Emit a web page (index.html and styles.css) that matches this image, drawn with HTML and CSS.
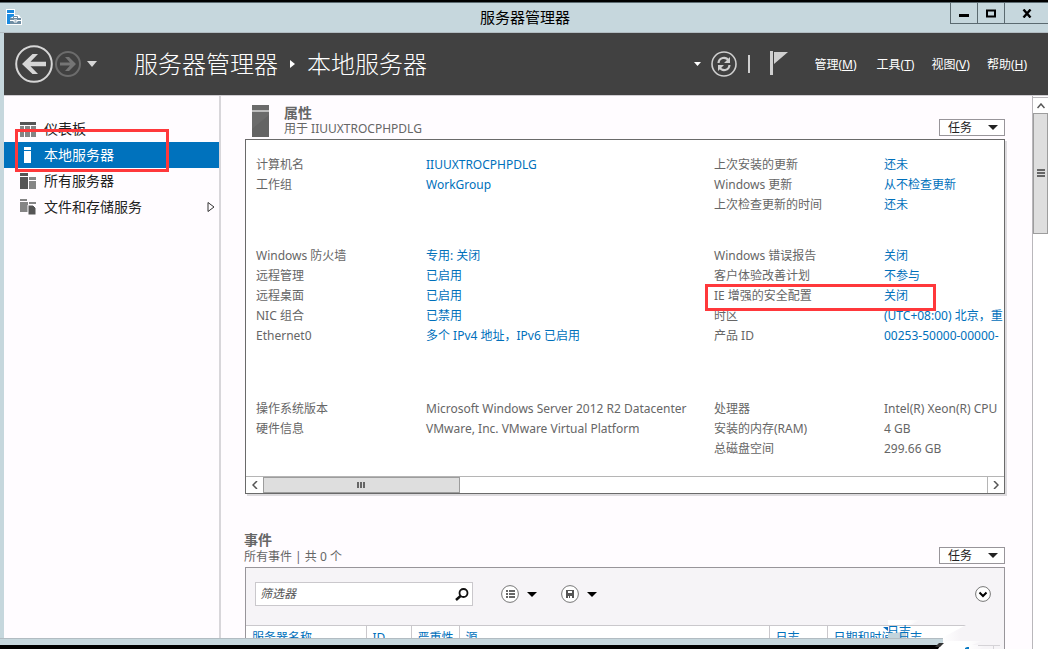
FILE: index.html
```html
<!DOCTYPE html>
<html lang="zh-CN">
<head>
<meta charset="utf-8">
<title>服务器管理器</title>
<link rel="stylesheet" href="styles.css">
</head>
<body>
<div class="window">
  <div class="titlebar">
    <svg class="app-icon" width="16" height="16" viewBox="0 0 16 16">
      <path d="M0 0h9v6h4l3 4v6H0z" fill="#fff"/>
      <path d="M1 1h7v3H1zM1 5h7v2L4 9v6H1z" fill="#1b8be0"/>
      <path d="M4 9h11v6H4z" fill="#6f8da3"/>
      <path d="M7.500 9V7.500h4V9" fill="none" stroke="#6f8da3"/>
      <path d="M4 11.500h4m3 0h4M8 11h3v2H8z" fill="none" stroke="#fff"/>
    </svg>
    <span class="window-title">服务器管理器</span>
    <div class="window-buttons">
      <button class="win-btn" aria-label="最小化"><svg width="10" height="9"><path d="M0 5h10v3H0z"/></svg></button>
      <button class="win-btn" aria-label="最大化"><svg width="10" height="9"><path d="M1 1.500h8v6H1z" fill="none" stroke="#000" stroke-width="2"/></svg></button>
      <button class="win-btn win-close" aria-label="关闭"><svg width="10" height="9"><path d="M1.500 .5l7 8M8.500 .5l-7 8" stroke="#000" stroke-width="2.400"/></svg></button>
    </div>
  </div>

  <header class="header">
    <button class="icon-btn" aria-label="后退"><svg width="38" height="38" viewBox="0 0 38 38" fill="none"><circle cx="19" cy="19" r="17.800" stroke="#d6d6d6" stroke-width="2"/><path d="M7 19L17.500 9H23l-7.500 7.700H31v4.600H15.500L23 29h-5.500z" fill="#d6d6d6"/></svg></button>
    <button class="icon-btn forward" aria-label="前进"><svg width="26" height="26" viewBox="0 0 26 26" fill="none"><circle cx="13" cy="13" r="12" stroke="#6c6c6c" stroke-width="2"/><path d="M21 13l-7-7h-4l5 5.500H5v3h10L10 20h4z" fill="#757575"/></svg></button>
    <button class="icon-btn history" aria-label="历史记录"><svg width="10" height="6"><path d="M0 0h10L5 6z" fill="#d6d6d6"/></svg></button>
    <nav class="crumbs" aria-label="位置">
      <span>服务器管理器</span>
      <svg width="5" height="8"><path d="M0 0l5 4-5 4z" fill="#fff"/></svg>
      <span>本地服务器</span>
    </nav>
    <div class="header-tools">
      <button class="icon-btn" aria-label="更多"><svg width="7" height="4"><path d="M0 0h7L3.500 4z" fill="#fff"/></svg></button>
      <button class="icon-btn refresh" aria-label="刷新"><svg width="26" height="26" viewBox="0 0 26 26" fill="none"><circle cx="13" cy="13" r="12" stroke="#cfcfcf" stroke-width="1.600"/><g stroke="#cfcfcf" stroke-width="2.200"><path d="M7.500 12c.5-6 7.500-6.500 10-2.500M18.500 14c-.5 6-7.500 6.500-10 2.500"/></g><path d="M19 6v6h-6zM7 20v-6h6z" fill="#cfcfcf"/></svg></button>
      <span class="divider"></span>
      <button class="icon-btn flag" aria-label="通知"><svg width="18" height="24"><path d="M0 0h3v24H0zM4 1h14L4 13z" fill="#cfcfcf"/></svg></button>
      <button class="menu menu-manage">管理(<u>M</u>)</button>
      <button class="menu">工具(<u>T</u>)</button>
      <button class="menu">视图(<u>V</u>)</button>
      <button class="menu">帮助(<u>H</u>)</button>
    </div>
  </header>

  <div class="body">
    <nav class="sidebar" aria-label="导航">
      <a class="nav-item" href="#dashboard"><svg width="16" height="16"><path d="M0 1h16v3H0z" fill="#555"/><path d="M0 5h4v5H0zM5 5h5v5H5zM11 5h5v5h-5zM0 11h4v5H0zM5 11h5v5H5zM11 11h5v5h-5z" fill="#858585"/></svg>仪表板</a>
      <a class="nav-item selected" href="#local" aria-current="page"><svg width="16" height="16"><path d="M4 0h7v3H4zM4 4h7v12H4z" fill="#fff"/></svg>本地服务器<span class="mark mark-nav"></span></a>
      <a class="nav-item" href="#all"><svg width="16" height="16"><path d="M0 0h8v3H0zM0 4h8v12H0z" fill="#555"/><path d="M9 4h7v3H9zM9 8h7v8H9z" fill="#858585"/></svg>所有服务器</a>
      <a class="nav-item" href="#files"><svg width="16" height="16"><path d="M0 0h7v2H0zM0 3h8v10H0zM9 3h7v2H9z" fill="#858585"/><path d="M8 6h5l3 3v7H8z" fill="#555" stroke="#fffcff"/></svg>文件和存储服务<svg class="expand" width="8" height="10"><path d="M1 .5l6 4.500-6 4.500z" fill="none" stroke="#333"/></svg></a>
    </nav>

    <main class="content">
      <section class="properties">
        <div class="section-head">
          <svg width="17" height="32"><path d="M0 0h17v32H0z" fill="#6b6b6b"/><path d="M0 5h17v2H0z" fill="#bdbdbd"/><path d="M0 32V24L17 10v22z" fill="#646464"/></svg>
          <div class="heading"><h2>属性</h2><p>用于 IIUUXTROCPHPDLG</p></div>
          <button class="tasks">任务<svg width="10" height="5"><path d="M0 0h10L5 5z" fill="#222"/></svg></button>
        </div>
        <div class="panel">
          <div class="groups">
            <div class="group">
              <dl>
                <div><dt>计算机名</dt><dd><a href="#name">IIUUXTROCPHPDLG</a></dd></div>
                <div><dt>工作组</dt><dd><a href="#workgroup">WorkGroup</a></dd></div>
              </dl>
              <dl>
                <div><dt>上次安装的更新</dt><dd><a href="#installed">还未</a></dd></div>
                <div><dt>Windows 更新</dt><dd><a href="#update">从不检查更新</a></dd></div>
                <div><dt>上次检查更新的时间</dt><dd><a href="#checked">还未</a></dd></div>
              </dl>
            </div>
            <div class="group group-network">
              <dl>
                <div><dt>Windows 防火墙</dt><dd><a href="#firewall">专用: 关闭</a></dd></div>
                <div><dt>远程管理</dt><dd><a href="#remote">已启用</a></dd></div>
                <div><dt>远程桌面</dt><dd><a href="#desktop">已启用</a></dd></div>
                <div><dt>NIC 组合</dt><dd><a href="#nic">已禁用</a></dd></div>
                <div><dt>Ethernet0</dt><dd><a href="#ethernet">多个 IPv4 地址，IPv6 已启用</a></dd></div>
              </dl>
              <dl>
                <div><dt>Windows 错误报告</dt><dd><a href="#errors">关闭</a></dd></div>
                <div><dt>客户体验改善计划</dt><dd><a href="#ceip">不参与</a></dd></div>
                <div><dt>IE 增强的安全配置</dt><dd><a href="#ie">关闭</a></dd><span class="mark mark-row"></span></div>
                <div><dt>时区</dt><dd><a href="#tz">(UTC+08:00) 北京，重</a></dd></div>
                <div><dt>产品 ID</dt><dd><a href="#id">00253-50000-00000-</a></dd></div>
              </dl>
            </div>
            <div class="group group-system">
              <dl>
                <div><dt>操作系统版本</dt><dd>Microsoft Windows Server 2012 R2 Datacenter</dd></div>
                <div><dt>硬件信息</dt><dd>VMware, Inc. VMware Virtual Platform</dd></div>
              </dl>
              <dl>
                <div><dt>处理器</dt><dd>Intel(R) Xeon(R) CPU</dd></div>
                <div><dt>安装的内存(RAM)</dt><dd>4 GB</dd></div>
                <div><dt>总磁盘空间</dt><dd>299.66 GB</dd></div>
              </dl>
            </div>
          </div>
          <div class="hscroll">
            <button class="scroll-btn" aria-label="向左滚动"><svg width="6" height="8"><path d="M5 0L1 4l4 4" fill="none" stroke="#555" stroke-width="1.500"/></svg></button>
            <div class="hthumb"><svg width="9" height="6"><path d="M0 0h2v6H0zM3 0h2v6H3zM6 0h2v6H6z" fill="#666"/></svg></div>
            <button class="scroll-btn scroll-right" aria-label="向右滚动"><svg width="6" height="8"><path d="M1 0l4 4-4 4" fill="none" stroke="#555" stroke-width="1.500"/></svg></button>
          </div>
        </div>
      </section>

      <section class="events">
        <div class="section-head events-head">
          <div class="heading"><h2>事件</h2><p>所有事件 | 共 0 个</p></div>
          <button class="tasks">任务<svg width="10" height="5"><path d="M0 0h10L5 5z" fill="#222"/></svg></button>
        </div>
        <div class="event-panel">
          <div class="toolbar">
            <div class="search">
              <input type="text" placeholder="筛选器" aria-label="筛选器">
              <svg width="14" height="13"><circle cx="8.500" cy="5" r="4" fill="none" stroke="#111" stroke-width="1.800"/><path d="M5.500 8L1 12" stroke="#111" stroke-width="2.400"/></svg>
            </div>
            <button class="icon-btn view" aria-label="查询条件"><svg width="18" height="18"><circle cx="9" cy="9" r="8.400" fill="#fff" stroke="#777"/><path d="M5 5h2v2H5zM8 5h6v2H8zM5 8h2v2H5zM8 8h6v2H8zM5 11h2v2H5zM8 11h6v2H8z" fill="#666"/></svg><svg width="10" height="5"><path d="M0 0h10L5 5z"/></svg></button>
            <button class="icon-btn view" aria-label="保存查询"><svg width="18" height="18"><circle cx="9" cy="9" r="8.400" fill="#fff" stroke="#777"/><path d="M5 5h8v8H5z" fill="#555"/><path d="M7 6h4v2H7zM7 11h1v2H7zM9 11h2v2H9z" fill="#fff"/></svg><svg width="10" height="5"><path d="M0 0h10L5 5z"/></svg></button>
            <button class="icon-btn collapse" aria-label="展开"><svg width="16" height="16"><circle cx="8" cy="8" r="7.400" fill="#fff" stroke="#777"/><path d="M4.500 6.500L8 10l3.500-3.500" fill="none" stroke="#000" stroke-width="2"/></svg></button>
          </div>
          <table class="event-table">
            <colgroup><col class="col-name"><col class="col-id"><col class="col-level"><col class="col-source"><col class="col-log"><col></colgroup>
            <thead><tr><th>服务器名称</th><th>ID</th><th>严重性</th><th>源</th><th>日志</th><th>日期和时间</th></tr></thead>
          </table>
        </div>
      </section>
    </main>

    <div class="vscroll">
      <button class="scroll-up" aria-label="向上滚动"><svg width="8" height="6"><path d="M0.500 5L4 1l3.500 4" fill="none" stroke="#555" stroke-width="1.500"/></svg></button>
      <div class="vthumb"><svg width="8" height="9"><path d="M0 0h8v2H0zM0 3h8v2H0zM0 6h8v2H0z" fill="#666"/></svg></div>
    </div>
  </div>

  <div class="frame-bottom"></div>
  <div class="tear">
    <svg width="170" height="32">
      <defs>
        <linearGradient id="fade"><stop offset="0" stop-color="#fff"/><stop offset="0.600" stop-color="#fff"/><stop offset="1" stop-color="#fff" stop-opacity="0"/></linearGradient>
        <linearGradient id="panel-fade"><stop offset="0" stop-color="#f6f4f7" stop-opacity="0"/><stop offset="0.300" stop-color="#f6f4f7"/></linearGradient>
      </defs>
      <path d="M88 8h38v24H64V21z" fill="url(#panel-fade)"/>
      <path d="M10 3h32l-10 5H10z" fill="url(#fade)"/>
      <path d="M10 16l18-1v6H10z" fill="#c2d4dc"/>
      <path d="M5 10h5v4z" fill="#0a6cbd"/>
      <path d="M66 24h38l-10 4h14l-6 4H60z" fill="url(#fade)"/>
      <path d="M100 28.500h22M115.500 29v3" stroke="#d5d3d7"/>
      <path d="M57 30l4-4h5l-4 4z" fill="#333"/><path d="M87 31l2-1h2v2h-4z" fill="#0a7bc4"/>
    </svg>
    <span class="tear-top">日志</span>
    <span class="tear-bottom">日志</span>
  </div>
</div>
</body>
</html>
```
FILE: styles.css
```css
* { box-sizing: border-box; }

body {
  margin: 0;
  background: #000;
  font: 12px/20px "Noto Sans", "Noto Sans CJK SC", sans-serif;
  color: #666;
}

button {
  margin: 0;
  padding: 0;
  border: 0;
  background: none;
  font: inherit;
  color: inherit;
}

svg { display: block; flex: none; }
h2, p, dl, dd { margin: 0; }
a { color: #0070bb; text-decoration: none; }

.window {
  position: relative;
  display: flex;
  flex-direction: column;
  height: 100vh;
  overflow: hidden;
  padding-left: 4px;
  border-top: 2px solid #000;
  background: #c6d7dd;
}

.titlebar {
  display: grid;
  grid-template-columns: 1fr auto 1fr;
  height: 31px;
  flex: none;
  border-top: 1px solid #5b6a70;
  border-bottom: 1px solid #b2bcc2;
  margin-left: -4px;
  padding-left: 2px;
}

.app-icon { margin: 6px 0 0 4px; }

.window-title {
  font-size: 15px;
  line-height: 28px;
  color: #000;
}

.window-buttons {
  display: flex;
  justify-self: end;
  height: 21px;
  border: 1px solid #5b6a70;
  border-width: 0 0 1px 1px;
}

.win-btn {
  display: grid;
  place-items: center;
  width: 27px;
  border-right: 1px solid #5b6a70;
}

.win-close { width: 43px; border: 0; }

.header {
  display: flex;
  align-items: center;
  flex: none;
  height: 62px;
  padding: 0 21px 0 11px;
  background: #414141;
  color: #fff;
}

.icon-btn { display: flex; align-items: center; }
.forward { margin-left: 2px; }
.history { margin-left: 6px; }

.crumbs {
  display: flex;
  align-items: center;
  gap: 12px;
  margin-left: 37px;
  font-size: 24px;
  font-weight: 300;
  line-height: 36px;
  white-space: nowrap;
}

.header-tools { display: flex; align-items: center; margin-left: auto; }
.refresh { margin-left: 10px; }

.divider {
  width: 2px;
  height: 18px;
  margin-left: 11px;
  background: #cfcfcf;
}

.flag { margin: 0 6px 3px 20px; }
.menu { margin-left: 20px; line-height: 22px; padding-top: 2px; white-space: nowrap; }
.menu + .menu { margin-left: 17px; }
.menu-manage { padding-right: 3px; }

.body {
  display: flex;
  flex: 1;
  min-height: 0;
  border-top: 1px solid #d0cdd2;
  background: #fffcff;
}

.sidebar {
  flex: none;
  width: 217px;
  padding-top: 20px;
  border-right: 2px solid #d8d6da;
}

.nav-item {
  position: relative;
  display: flex;
  align-items: center;
  gap: 8px;
  height: 26px;
  padding-left: 16px;
  font-size: 14px;
  color: #222;
}

.selected { background: #0072bd; color: #fff; }
.expand { margin-left: auto; margin-right: 4px; }

.mark {
  position: absolute;
  z-index: 2;
  border: 3px solid #ff383b;
}

.mark-nav { inset: -13px 50px -4px 11px; }

.content {
  flex: 1;
  min-width: 0;
  overflow: hidden;
  padding: 8px 27px 0 24px;
}

.section-head {
  display: flex;
  align-items: flex-end;
  height: 35px;
  padding-left: 7px;
}

.section-head > svg { margin-bottom: 2px; }
.heading { flex: 1; margin-left: 15px; align-self: flex-start; }
.heading h2 { font-size: 14px; line-height: 17px; }
.heading p { line-height: 16px; }

.tasks {
  display: flex;
  align-items: center;
  justify-content: space-between;
  width: 66px;
  height: 17px;
  margin-bottom: 3px;
  padding: 0 6px 0 8px;
  border: 1px solid #98959a;
  background: #fff;
  color: #222;
}

.panel {
  border: 1px solid #6a6a6a;
  box-shadow: 2px 2px 0 #dddbde;
  background: #fff;
}

.groups {
  overflow: hidden;
  padding: 15px 0 17px 10px;
  white-space: nowrap;
}

.group { display: grid; grid-template-columns: 458px 1fr; }
.group-network { margin: 31px 0 53px; }

.group dl > div {
  position: relative;
  display: grid;
  grid-template-columns: 170px 1fr;
}

.mark-row { top: -2px; bottom: -5px; left: -9px; width: 231px; }

.hscroll {
  display: flex;
  height: 17px;
  border-top: 1px solid #b5b5b5;
}

.scroll-btn { display: grid; place-items: center; width: 17px; }
.scroll-right { margin-left: auto; border-left: 1px solid #b5b5b5; }

.hthumb {
  display: grid;
  place-items: center;
  width: 26%;
  border: 1px solid #9d9d9d;
  background: #dedede;
}

.events { padding-top: 37px; }
.events-head { height: 36px; padding-left: 0; }
.events-head .heading { margin-left: -1px; }
.events-head .heading p { line-height: 18px; }

.event-panel { border: 1px solid #98959a; background: #f6f4f7; }

.toolbar {
  display: flex;
  align-items: center;
  height: 57px;
  padding: 0 13px 5px 9px;
}

.search {
  display: flex;
  align-items: center;
  width: 218px;
  height: 24px;
  padding: 0 3px 0 4px;
  border: 1px solid #cac8cc;
  background: #fff;
}

.search input {
  flex: 1;
  min-width: 0;
  padding: 0;
  border: 0;
  background: none;
  font: inherit;
}

.search input::placeholder { color: #555; font-style: italic; opacity: 1; }

.view { gap: 8px; margin-left: 28px; }
.view + .view { margin-left: 24px; }
.collapse { margin-left: auto; }

.event-table {
  width: 100%;
  table-layout: fixed;
  border-collapse: collapse;
  border-top: 1px solid #cac8cc;
  background: #fff;
}

.event-table th {
  padding: 0 0 0 6px;
  border-left: 1px solid #cac8cc;
  text-align: left;
  font-weight: 400;
  line-height: 24px;
  color: #0070bb;
}

.event-table th:first-child { border-left: 0; }
.col-name { width: 120px; }
.col-id { width: 45px; }
.col-level { width: 48px; }
.col-source { width: 310px; }
.col-log { width: 58px; }

.vscroll {
  flex: none;
  width: 16px;
  padding-top: 1px;
  border-left: 1px solid #b9b7bb;
  background: #fff;
}

.scroll-up {
  display: grid;
  place-items: center;
  width: 100%;
  height: 16px;
  border-top: 1px solid #b9b7bb;
}

.vthumb {
  display: grid;
  place-items: center;
  height: 121px;
  border: 1px solid #9d9d9d;
  background: #dedede;
}

/* The lower window edge stops where the torn corner begins. */
.frame-bottom {
  position: absolute;
  bottom: 0;
  left: 0;
  right: 105px;
  height: 11px;
  border-top: 1px solid #b2bcc2;
  border-bottom: 4px solid #000;
  background: #c6d7dd;
}

.tear {
  position: absolute;
  right: 0;
  bottom: 0;
  height: 32px;
  color: #0070bb;
}

.tear span {
  position: absolute;
  overflow: hidden;
  white-space: nowrap;
}

.tear-top { left: 9px; top: 7px; height: 9px; line-height: 16px; }
.tear-bottom { left: 20px; top: 13px; height: 8px; line-height: 16px; }
```
